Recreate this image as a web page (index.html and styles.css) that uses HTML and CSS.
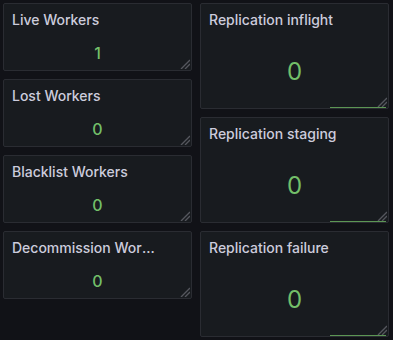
FILE: index.html
```html
<!DOCTYPE html>
<html lang="en">
<head>
    <meta charset="UTF-8">
    <meta name="viewport" content="width=device-width, initial-scale=1.0">
    <title>Workers</title>
    <link rel="stylesheet" href="styles.css">
</head>
<body>
    <div class="dashboard">
        <div class="panel small left r1">
            <div class="panel-header"><h2 class="panel-title">Live Workers</h2></div>
            <div class="panel-body"><span class="stat">1</span></div>
            <svg class="resize-handle" width="10" height="10" viewBox="0 0 10 10"><path d="M10 1 L1 10 M10 5 L5 10"/></svg>
        </div>
        <div class="panel large right r1">
            <div class="panel-header"><h2 class="panel-title">Replication inflight</h2></div>
            <div class="panel-body"><span class="stat">0</span><div class="sparkline"></div></div>
            <svg class="resize-handle" width="10" height="10" viewBox="0 0 10 10"><path d="M10 1 L1 10 M10 5 L5 10"/></svg>
        </div>
        <div class="panel small left r3">
            <div class="panel-header"><h2 class="panel-title">Lost Workers</h2></div>
            <div class="panel-body"><span class="stat">0</span></div>
            <svg class="resize-handle" width="10" height="10" viewBox="0 0 10 10"><path d="M10 1 L1 10 M10 5 L5 10"/></svg>
        </div>
        <div class="panel large right r4">
            <div class="panel-header"><h2 class="panel-title">Replication staging</h2></div>
            <div class="panel-body"><span class="stat">0</span><div class="sparkline"></div></div>
            <svg class="resize-handle" width="10" height="10" viewBox="0 0 10 10"><path d="M10 1 L1 10 M10 5 L5 10"/></svg>
        </div>
        <div class="panel small left r5">
            <div class="panel-header"><h2 class="panel-title">Blacklist Workers</h2></div>
            <div class="panel-body"><span class="stat">0</span></div>
            <svg class="resize-handle" width="10" height="10" viewBox="0 0 10 10"><path d="M10 1 L1 10 M10 5 L5 10"/></svg>
        </div>
        <div class="panel small left r7">
            <div class="panel-header"><h2 class="panel-title">Decommission Workers</h2></div>
            <div class="panel-body"><span class="stat">0</span></div>
            <svg class="resize-handle" width="10" height="10" viewBox="0 0 10 10"><path d="M10 1 L1 10 M10 5 L5 10"/></svg>
        </div>
        <div class="panel large right r7">
            <div class="panel-header"><h2 class="panel-title">Replication failure</h2></div>
            <div class="panel-body"><span class="stat">0</span><div class="sparkline"></div></div>
            <svg class="resize-handle" width="10" height="10" viewBox="0 0 10 10"><path d="M10 1 L1 10 M10 5 L5 10"/></svg>
        </div>
    </div>
</body>
</html>
```

FILE: styles.css
```css
body {
    margin: 0;
    background: #111217;
    font-family: Inter, "Noto Sans", sans-serif;
    color: #ccccdc;
    height: 340px;
    overflow: hidden;
}
.dashboard {
    display: grid;
    grid-template-columns: 189px 189px;
    grid-auto-rows: 30px;
    column-gap: 8px;
    row-gap: 8px;
    padding: 3px 4px 0 3px;
}
.panel {
    position: relative;
    background: #181b1f;
    border: 1px solid #2a2c32;
    border-radius: 2px;
    display: flex;
    flex-direction: column;
    min-width: 0;
}
.left { grid-column: 1; }
.right { grid-column: 2; }
.small { grid-row-end: span 2; }
.large { grid-row-end: span 3; }
.r1 { grid-row-start: 1; }
.r3 { grid-row-start: 3; }
.r4 { grid-row-start: 4; }
.r5 { grid-row-start: 5; }
.r7 { grid-row-start: 7; }
.panel-header {
    height: 31px;
    padding: 0 34px 0 8px;
    display: flex;
    align-items: center;
    min-width: 0;
}
.panel-title {
    margin: 0;
    font-size: 14px;
    font-weight: 500;
    color: #ccccdc;
    white-space: nowrap;
    overflow: hidden;
    text-overflow: ellipsis;
}
.panel-body {
    flex: 1;
    display: flex;
    flex-direction: column;
    align-items: center;
    justify-content: center;
}
.stat {
    color: #73bf69;
    font-size: 16px;
    font-weight: 500;
    line-height: 1;
}
.large .panel-body {
    justify-content: flex-end;
}
.large .stat {
    font-size: 24px;
    font-weight: 400;
    flex: 1;
    display: flex;
    align-items: center;
    padding-top: 2px;
}
.sparkline {
    align-self: flex-end;
    width: 56px;
    height: 1px;
    margin-right: 2px;
    background: #5c9654;
}
.resize-handle {
    position: absolute;
    right: 1px;
    bottom: 1px;
}
.resize-handle path {
    stroke: #55575e;
    stroke-width: 1.4;
    fill: none;
}
```
